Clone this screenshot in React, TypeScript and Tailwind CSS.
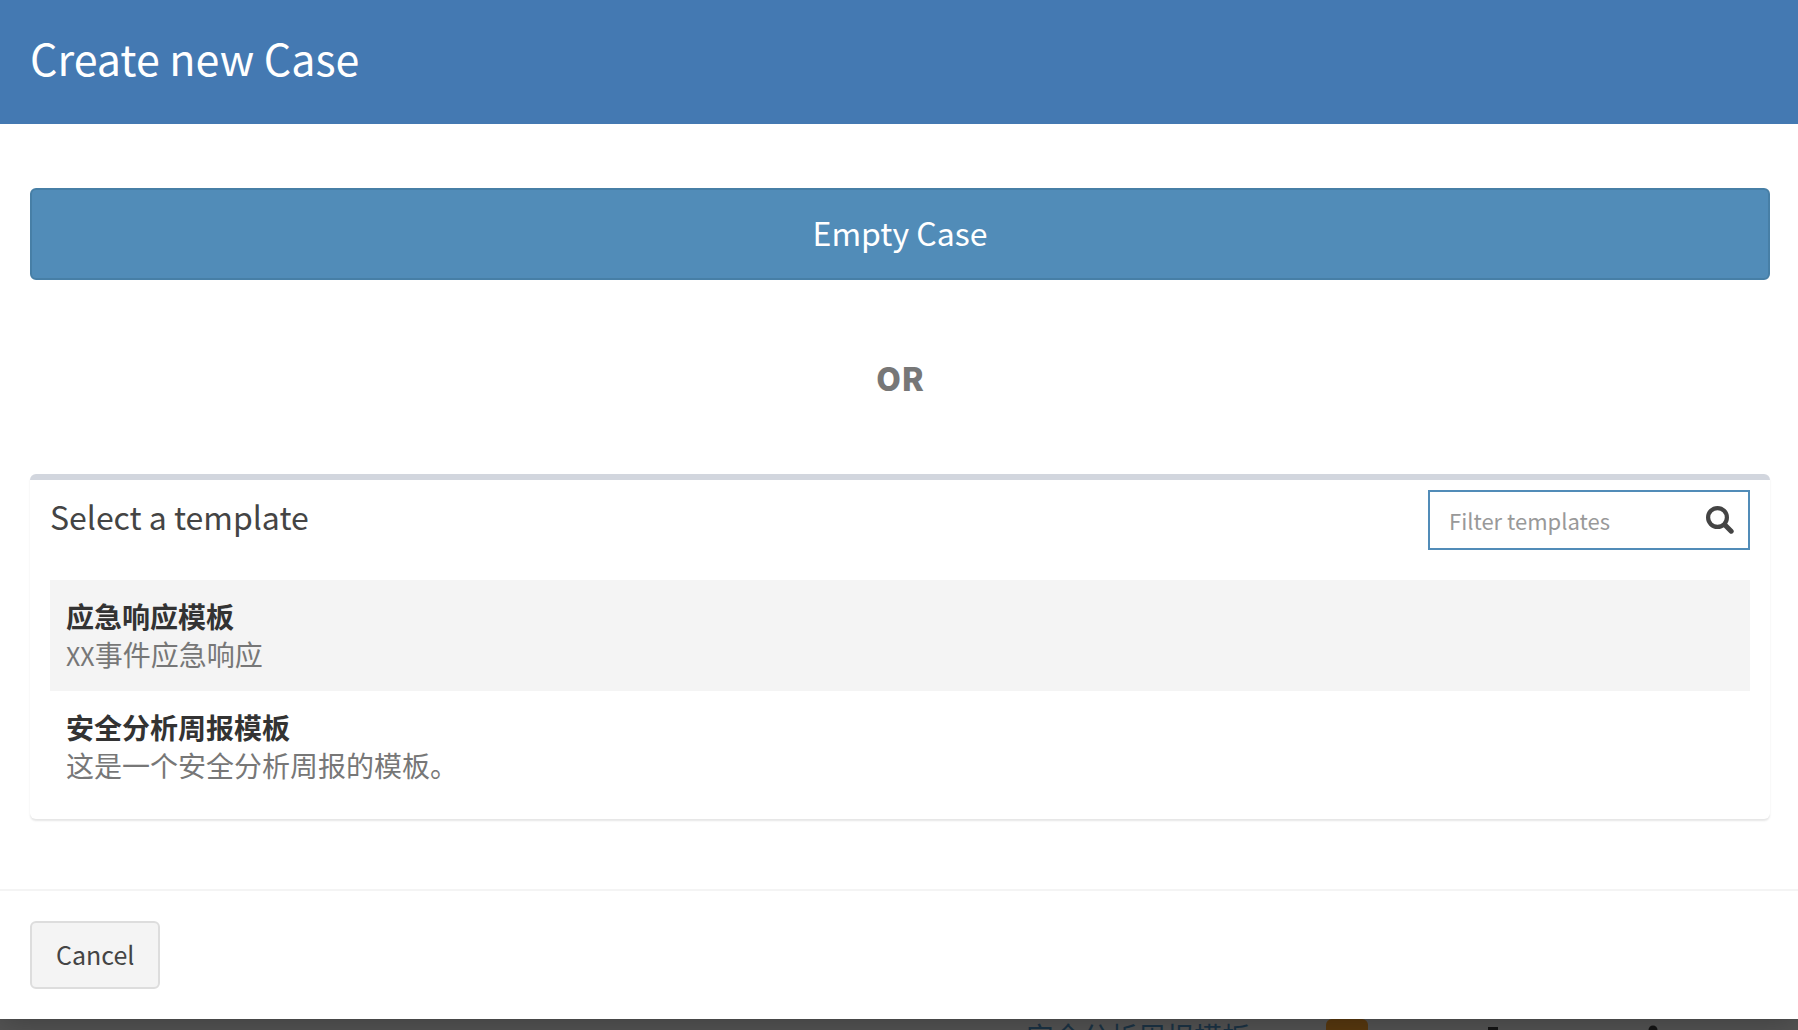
import { useState } from "react";

type Template = { prefix?: string; title: string; description: string };

const templates: Template[] = [
  { title: "应急响应模板", prefix: "XX", description: "事件应急响应" },
  { title: "安全分析周报模板", description: "这是一个安全分析周报的模板。" },
];

function SearchIcon() {
  return (
    <svg viewBox="0 0 28 28" className="size-7" aria-hidden="true" fill="none" stroke="#444" strokeLinecap="round">
      <circle cx="11.5" cy="11.5" r="9.4" strokeWidth="4.2" />
      <path d="M19 19l6.2 6.2" strokeWidth="5" />
    </svg>
  );
}

function TemplateRow({ template, active }: { template: Template; active: boolean }) {
  return (
    <li className={active ? "border-b-2 border-[#f4f4f4] bg-[#f4f4f4]" : ""}>
      <button type="button" className="block w-full px-4 pt-[17px] pb-[15px] text-left text-[28px] leading-[38px]">
        <span className="block font-bold text-[#333]">{template.title}</span>
        <span className="block text-[#777]">
          {template.prefix && <span className="text-[25px]">{template.prefix}</span>}
          {template.description}
        </span>
      </button>
    </li>
  );
}

export default function App() {
  const [filter, setFilter] = useState("");
  const shown = templates.filter((t) => t.title.includes(filter));

  return (
    <div className="flex h-screen flex-col overflow-hidden bg-[#545454] font-['Noto_Sans_CJK_SC',sans-serif] text-[#444]">
      <main className="relative shrink-0 bg-white shadow-[0_4px_30px_rgba(0,0,0,0.25)]">
        <header className="bg-[#4479b2] px-[30px] pt-[27px] pb-[37px]">
          <h1 className="text-[43px] leading-[60px] text-white">Create new Case</h1>
        </header>

        <div className="pt-16 pr-7 pb-[70px] pl-[30px]">
          <button
            type="button"
            className="block h-[92px] w-full rounded-md border-2 border-[#477fa6] bg-[#518cb8] pb-1 text-[32px] text-white"
          >
            Empty Case
          </button>

          <p className="py-16 text-center text-[32px] leading-[66px] font-black text-[#777]">OR</p>

          <section className="rounded-md border-t-[6px] border-[#d2d6de] px-5 pb-5 shadow-[0_2px_2px_rgba(0,0,0,0.1)]">
            <div className="flex items-start justify-between pt-[10px] pb-[30px]">
              <h2 className="text-[32px] leading-[52px]">Select a template</h2>
              <label className="flex h-[60px] w-[322px] items-center border-2 border-[#518cb8] pr-[14px] pl-[19px]">
                <input
                  type="text"
                  aria-label="Filter templates"
                  placeholder="Filter templates"
                  value={filter}
                  onChange={(e) => setFilter(e.target.value)}
                  className="min-w-0 flex-1 text-[22px] outline-none placeholder:text-[#999]"
                />
                <SearchIcon />
              </label>
            </div>
            <ul>
              {shown.map((t, i) => (
                <TemplateRow key={t.title} template={t} active={i === 0} />
              ))}
            </ul>
          </section>
        </div>

        <footer className="border-t-2 border-[#f4f4f4] px-[30px] py-[30px]">
          <button
            type="button"
            className="block h-[68px] rounded-md border-2 border-[#ddd] bg-[#f4f4f4] px-6 text-[25px]"
          >
            Cancel
          </button>
        </footer>
      </main>

      {/* Dimmed case list behind the dialog */}
      <div className="flex min-h-0 flex-1 items-start overflow-hidden pl-[1026px] text-[28px] leading-[34px]">
        <a href="#template" className="w-[300px] shrink-0 text-[#1b3345]">
          安全分析周报模板
        </a>
        <span className="h-8 w-[42px] shrink-0 rounded-md bg-[#59390f]" />
        <svg viewBox="0 0 180 32" className="ml-[118px] h-8 w-[180px] shrink-0" aria-hidden="true" fill="#151515">
          <path d="M2 8h10v20h-10z" />
          <circle cx="167" cy="11" r="4.5" />
        </svg>
      </div>
    </div>
  );
}
